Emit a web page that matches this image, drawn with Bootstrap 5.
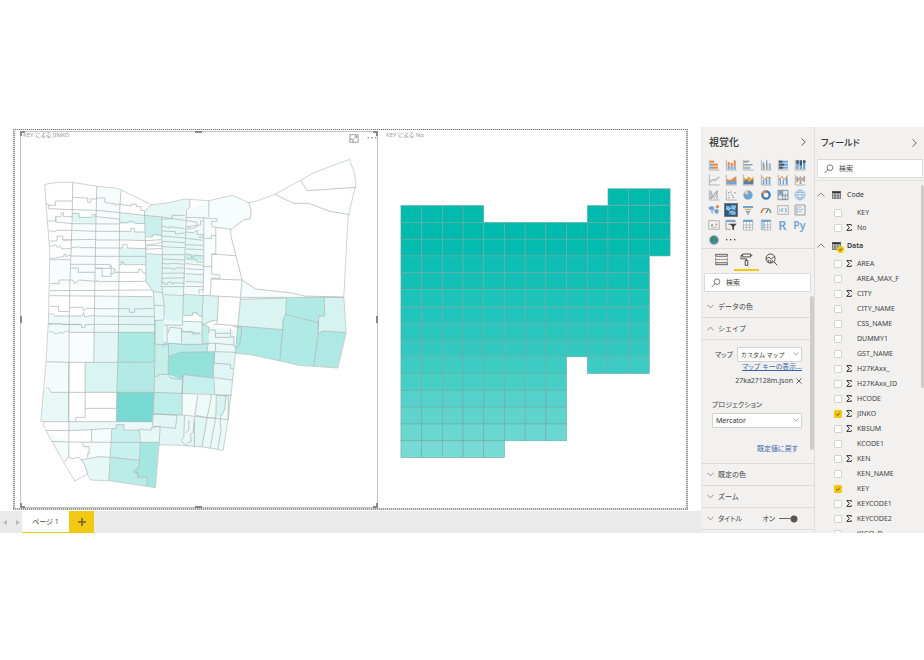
<!DOCTYPE html>
<html lang="ja">
<head>
<meta charset="utf-8">
<meta name="viewport" content="width=device-width, initial-scale=1">
<title>レポート - ページ 1</title>
<link href="https://cdn.jsdelivr.net/npm/bootstrap@5.3.0/dist/css/bootstrap.min.css" rel="stylesheet">
<style>
body{height:100vh;padding:127px 0;background:#fff;color:#444;font:7px/10px "Noto Sans","Noto Sans CJK JP",sans-serif;font-feature-settings:"palt";overflow:hidden}
svg{display:block}
.report{margin:2px 13px 1px;padding:2px;background:repeating-linear-gradient(90deg,#777 0 1px,#ddd 1px 2px) top/100% 1px no-repeat,repeating-linear-gradient(90deg,#999 0 1px,#ddd 1px 2px) bottom/100% 2px no-repeat,repeating-linear-gradient(#999 0 1px,#ddd 1px 2px) left/2px 100% no-repeat,repeating-linear-gradient(#999 0 1px,#ddd 1px 2px) right/2px 100% no-repeat}
.visual-a{flex:357;margin-left:5px;border:1px solid #c4c4c4}
.visual-b{flex:309}
.visual-title{font-size:6px;line-height:6px;color:#999;padding:0 0 0 2px;height:16px}
.visual-b .visual-title{padding:1px 0 0 8px}
.plot{width:100%;min-height:0;flex:1 1 0}
.icon-btn{border:0;background:none;padding:0;color:#777;line-height:0}
.handle{position:absolute;border:0 solid #888}
.h-tl{top:-1px;left:-1px;width:5px;height:5px;border-width:2px 0 0 2px}
.h-tr{top:-1px;right:-1px;width:5px;height:5px;border-width:2px 2px 0 0}
.h-bl{bottom:-1px;left:-1px;width:5px;height:5px;border-width:0 0 2px 2px}
.h-br{bottom:-1px;right:-1px;width:5px;height:5px;border-width:0 2px 2px 0}
.h-t,.h-b{left:50%;width:7px;margin-left:-4px;border-top-width:2px}
.h-t{top:-1px}.h-b{bottom:-1px}
.h-l,.h-r{top:50%;height:7px;margin-top:-4px;border-left-width:2px}
.h-l{left:-1px}.h-r{right:-1px}
.tabs-bar{height:22px;background:#eaeaea}
.page-arrow{width:13px;border:0;background:none;padding:0 0 0 7px;color:#aaa}
.page-arrow:first-child{width:9px;padding:0 0 0 3px}
.page-tab{width:47px;background:#fff;border:0;border-bottom:1px solid #f2c811;font-size:7px;padding:0;color:#444}
.page-add{width:25px;background:#f2c811;border:0;padding:0;color:#666}
.pane{background:#f2f1f0}
.pane-viz{width:113px;border-left:1px solid #eceae8}
.pane-fields{width:110px;border-left:1px solid #e1dfdd}
.pane-head{height:30px;padding:0 8px 0 7px}
.pane-title{font-size:10px;line-height:14px;font-weight:500;margin:0;color:#333}
.pane-fields .pane-title{font-size:9px}
.pane-fields .pane-head{padding:0 7px 0 6px;height:32px}
.gallery{display:grid;grid-template-columns:repeat(6,1fr);grid-auto-rows:15px;padding:0 5px 1px 3px;justify-items:center;align-items:center}
.gallery button{border:0;background:none;padding:0;line-height:0}
.gallery button.on{outline:1px solid #777}
.fmt-tabs{height:23px;border-top:1px solid #dddbd9;padding-left:7px}
.fmt-tabs button{width:25px;border:0;border-bottom:2px solid transparent;background:none;padding:0 6px;line-height:0}
.fmt-tabs button.on{border-bottom-color:#f2c811}
.find{background:#fff;border:1px solid #dcdad8;border-radius:1px;height:19px;padding-left:6px;gap:5px}
.find input{border:0;outline:0;background:none;font-size:7px;line-height:10px;padding:0;min-width:0;flex:1;color:#333}
.find input::placeholder{color:#444;opacity:1}
.find-viz{margin:2px 3px 4px 2px}
.find-fields{margin:0 1px 2px 2px}
.sect{height:22px;border:0;border-bottom:1px solid #dddbd9;background:none;padding:0 0 0 5px;gap:4px;width:100%;color:#444;text-align:left}
.settings{position:relative}
.thumb{position:absolute;right:0;width:3px;background:#cfcdcb;border-radius:2px}
.thumb-viz{top:0;height:154px;width:4px}
.thumb-fields{top:4px;height:203px}
.shape-body{height:124px;border-bottom:1px solid #dddbd9;padding:7px 12px 0 10px}
.pick{position:relative}
.pick select{appearance:none;border:1px solid #d4d2d0;border-radius:1px;background:#fff;height:15px;width:100%;padding:0 8px 0 3px;font-size:7px;line-height:10px;color:#333}
.pick svg{position:absolute;right:3px;top:5px;pointer-events:none}
.pick-map{width:65px}
.pick-map select{font-size:6px}
.lnk{color:#3a67a8}
.file-row{height:14px;gap:3px}
.proj-row{padding-top:15px}
.toggle{appearance:none;margin:0;width:19px;height:8px;background:linear-gradient(#666,#666) left center/14px 1px no-repeat,radial-gradient(circle at 15px 4px,#555 3px,transparent 4px)}
.tree{position:relative;border-top:1px solid #e3e1df;padding-top:3px;min-height:0}
.tree-head{height:21px;padding:0 0 0 2px;border:0;background:none;color:#333;gap:3px;width:100%;text-align:left}
.tree-head .tname{padding-left:3px}
.field{height:15px;padding-left:19px}
.field .sig{width:15px;padding-left:4px;line-height:10px}
.field .form-check-input{width:8px;height:8px;margin:0;border:1px solid #d6d4d2;border-radius:1px;background-color:#fff;flex:none}
.field .form-check-input:checked{background-color:#f2c811;border-color:#f2c811;background-image:url("data:image/svg+xml,%3Csvg xmlns='http://www.w3.org/2000/svg' viewBox='0 0 8 8'%3E%3Cpath d='M1.5 4l2 2 3-4' fill='none' stroke='%23443'/%3E%3C/svg%3E")}
</style>
<script src="https://cdn.jsdelivr.net/npm/bootstrap@5.3.0/dist/js/bootstrap.bundle.min.js"></script>
</head>
<body>
<svg width="0" height="0" class="position-absolute" aria-hidden="true">
<symbol id="down" viewBox="0 0 8 5"><path d="M.5.5 4 4 7.500.5" fill="none" stroke="#666" stroke-width=".8"/></symbol>
<symbol id="up" viewBox="0 0 8 5"><path d="M.5 4.500 4 1l3.500 3.500" fill="none" stroke="#666" stroke-width=".8"/></symbol>
<symbol id="next" viewBox="0 0 5 8"><path d="M.5.5 4.300 4 .5 7.500" fill="none" stroke="#555" stroke-width=".9"/></symbol>
<symbol id="lens" viewBox="0 0 30 30"><circle cx="18" cy="11" r="8.500" fill="none" stroke="#444" stroke-width="2.200"/><path d="M12 17 2 27" stroke="#444" stroke-width="2.400"/></symbol>
<symbol id="table" viewBox="0 0 27 24"><path d="M1 1h25v22H1z" fill="#eee" stroke="#444" stroke-width="2"/><path d="M1 1h25v6H1z" fill="#333"/><path d="M1 12.500h25M1 18h25M9 5v18M18 5v18" stroke="#444" stroke-width="2"/></symbol>
</svg>
<main class="d-flex h-100 overflow-hidden">
<section class="d-flex flex-column flex-fill" style="min-width:0">
  <div class="report d-flex flex-fill" style="min-height:0">
    <article class="visual-a position-relative d-flex flex-column">
      <header class="visual-title d-flex justify-content-between"><span>KEY による JINKO</span>
        <span class="d-flex align-items-center gap-2 pb-1">
          <button class="icon-btn" aria-label="フォーカス モード"><svg width="10" height="9" viewBox="0 0 28 26"><path d="M2 2h24v22H2zM2 15h9v9M13 14l9-8m-6 0h6v6" fill="none" stroke="currentColor" stroke-width="2"/></svg></button>
          <button class="icon-btn" aria-label="その他のオプション"><svg width="10" height="9" viewBox="0 0 28 26" fill="#666"><circle cx="3" cy="11" r="2"/><circle cx="14" cy="11" r="2"/><circle cx="25" cy="11" r="2"/></svg></button>
        </span></header>
      <svg class="plot" viewBox="63 84 1065 1077" role="img" aria-label="KEY による JINKO">
        <g id="areas"></g>
        <g fill="none" stroke="#adb5b5" stroke-width="2.200" stroke-linejoin="round">
          <path stroke="#bcc3c3" d="M133 193 170 187H217L289 199 352 205 453 254 500 249 552 237 625 242 697 226 745 248 770 243 823 223 900 181 940 158 1047 118 1062 160 1067 190 1043 290 1030 530 1037 630V638L1012 744 940 739 895 736 840 723 750 704 705 700 683 898 668 991 602 980 540 976 476 974 465 1103 325 1082 270 1080 260 1063 223 1083 190 1028 137 933 130 920V905H121L130 803 137 725 144 600 148 400 146 370 137 253Z"/>
          <!-- west blocks, streets running north to south -->
          <path d="M217 187 215 300 208 500 206 630 205 1010M289 199 286 330 283 500 280 727M362 210 358 260 356 430 354 630 352 727 349 817 348 905M453 254 432 275 436 400V485L459 515 463 600V727L461 817 457 907M484 291V348L486 420 484 500 491 555V600M569 239 568 262 558 272 555 350 552 450 549 520 546 615M457 515 488 518"/>
          <!-- west blocks, lots -->
          <path d="M137 253H145V256H165V243H216M217 232 262 234V247H271V236L289 238M289 234H313V247L344 252V256L350 252 392 258V253H408V260H422V271H433M145 256V266L216 269 286 271 358 278 433 286 484 291M141 303H166V290H182V279H189V290H216M216 280H236V292H275V283H284V292M286 290 357 297M166 290V306L216 311 357 312M357 308H380L386 304H398L405 310 433 311M145 332H149L153 337 158 331 163 337 168 331H214L286 334H391V325H402V336H434"/>
          <path d="M148 363H170V348H187V360H214M187 360 286 358M286 360H372L435 362M146 378H160L165 374 172 383 178 377 184 386H214M214 382H228L232 379 237 383H285M285 384H367V373H380V384L436 386M150 415 170 413 190 409V404H197V411L208 405V408L286 409H436M148 419H208M211 433H284L329 434V445H284M284 445H305V469H332V434M332 445H341L345 450H341V459L332 462M341 457H415V448H423L428 459H436M357 434H363V424L370 427V434H435M211 444H234V457H284M211 480H216L222 491 230 485 236 480 283 484H290V481L296 485 436 484M150 491H176V480H208M148 512 456 510M148 527 456 530"/>
          <path d="M148 559H174V574L206 575M208 562H247L250 573 257 565H283M283 566H387V577H402V567L460 565M146 582H160L164 589 172 588H207M207 588H246L249 577 252 590 283 586M283 588 461 590M144 610 207 614H243V622H254V614L283 613 463 614M146 636H156L167 642 176 637 186 640 195 634H204M144 613H152L160 610 167 614 175 609 183 613H240M205 637H463M137 725 205 727H453L458 722H463M137 803 144 804 152 817H461M254 727V892M254 865H348M205 727 204 905M226 904V892H254M130 905H457M137 931 203 932 273 929 330 925M154 964 203 966 335 967H475M273 929V966M334 925 325 1082M205 1010 190 1028M205 1010 214 1016 235 1012 242 1020 295 1010 334 1012 416 1021M242 1020 253 1035 262 1063M246 967 249 980H266V1000H262V1013"/>
          <path d="M334 926H347V914H370V930H417L419 966 416 1042H410V1050H403V1057H412V1072H440V1097M417 927 452 931V923H464V919L479 921 476 975M457 907 455 918 465 919M457 882 530 886 525 925 465 919"/>
          <!-- central strip -->
          <path d="M436 348 445 352 457 350V344H470L484 348M436 362 484 359M436 374 484 378M436 388 484 385M436 401 484 404M436 388 442 377 484 367M484 291 553 301M484 298 515 296V286H553M484 318 508 324V320L553 326M484 333 525 335V342L553 339M484 348 553 354M484 364 553 368M484 380 553 383M484 404 553 404M484 417 553 420M484 430 500 432 520 430 553 433M484 444H508L518 448 530 443 553 445M484 460 553 459M484 475 553 473M484 487H492V493H502V486H513V492H520V488L553 490M484 500 553 500M490 524 549 526M460 556 489 557M463 602 490 600M490 615 546 616M500 615V666M463 672 488 674V683M489 668 555 674 625 672M463 602V672"/>
          <path d="M502 640 508 622 543 625V667M543 625 548 635 575 635V642H590L600 636M488 674H504V700L503 760M504 710 540 697 642 695 638 774M503 760 510 774 540 779 550 764 638 774M463 769 475 768V763H508M546 767 545 883M549 764 544 820M461 817 695 826M457 882 545 885H545L684 899M552 888 550 950 543 962 548 970 565 977M582 890 578 936 570 942 572 965 560 968"/>
          <!-- small lots east of the main avenue -->
          <path d="M625 242V292M556 293 576 292 605 294 610 292V440L608 520M556 301 590 307V320L575 326 563 322V329H556M556 320 600 315V303H610M556 336 580 338 590 330V344H607V352H594M556 355 608 361M556 374 608 376M556 387 608 389M556 402 572 404V412H580V405L608 408M556 416 590 420V426H608M556 431 608 436M556 446 608 449M556 461 608 464M556 485 608 487M556 499 608 500M608 509H596V522M610 294 635 296H650V304H634V320L693 328M646 322V402M633 346V355H610M633 346H646M646 402H634V462L658 465V475H630M634 402 706 407M608 440H634M632 477 630 526M632 477 725 480M548 523 720 532M654 529 650 612 640 614M608 525 605 590M550 587H576V578H590L594 587 605 590V616L632 602 650 600M547 604 605 606"/>
          <path d="M745 248 751 268V296L730 300 690 329M690 329 692 350 725 480 765 507 875 519 912 528 1030 531M725 480 720 530M720 538 858 534 855 583 848 600 847 630M720 532 718 560 712 618 847 629M855 583 953 608M971 532 973 588H955L953 630M901 181 920 212 1067 202M823 223 880 250H925L988 274 1048 284M720 532 1030 532M953 600V640L940 739M953 640 970 633 1037 638M847 629 838 723M712 618 705 700M650 612 712 618"/>
          <path d="M605 616V667M605 610 625 620V640M546 636H575L600 642M605 670H645L700 675M620 680V695M645 670V695L705 697M628 630H645V640H690M645 640V652H690M690 628V650H700V675L705 685 718 675 720 648 724 645M700 620 722 622 723 645M643 696 640 730 690 733V745L700 747M640 772 698 781M640 774 643 822M592 825 583 885 619 893M632 825V835L620 892 605 980M648 825 646 892 629 984M677 825 672 870 660 888 659 908 662 930 652 988M619 893 646 894M645 825 684 828 683 898M582 905V980M565 900V930L555 940"/>
        </g>
      </svg>
      <i class="handle h-tl"></i><i class="handle h-t"></i><i class="handle h-tr"></i><i class="handle h-l"></i><i class="handle h-r"></i><i class="handle h-bl"></i><i class="handle h-b"></i><i class="handle h-br"></i>
    </article>
    <article class="visual-b d-flex flex-column">
      <header class="visual-title">KEY による No</header>
      <svg class="plot" viewBox="-9 81 927 1083" role="img" aria-label="KEY による No"><g id="tiles" stroke="#72aaa4" stroke-width="1.800"></g></svg>
    </article>
  </div>
  <nav class="tabs-bar d-flex flex-shrink-0" aria-label="ページ">
    <button class="page-arrow" aria-label="前へ"><svg width="4" height="5" viewBox="0 0 4 5"><path d="M4 0v5L0 2.500z" fill="#bbb"/></svg></button>
    <button class="page-arrow" aria-label="次へ"><svg width="4" height="5" viewBox="0 0 4 5"><path d="M0 0v5l4-2.500z" fill="#bbb"/></svg></button>
    <button class="page-tab">ページ 1</button>
    <button class="page-add d-flex align-items-center justify-content-center" aria-label="新しいページ"><svg width="8" height="8" viewBox="0 0 8 8"><path d="M4 0v8M0 4h8" stroke="#6b6335" stroke-width="1.600"/></svg></button>
  </nav>
</section>

<aside class="pane pane-viz d-flex flex-column flex-shrink-0 overflow-hidden">
  <header class="pane-head flex-shrink-0 d-flex align-items-center justify-content-between"><h2 class="pane-title">視覚化</h2><button class="icon-btn" aria-label="折りたたむ"><svg width="5" height="8"><use href="#next"/></svg></button></header>
  <div class="gallery flex-shrink-0" id="gallery"></div>
  <div class="fmt-tabs d-flex flex-shrink-0">
    <button aria-label="フィールド"><svg width="13" height="13" viewBox="0 0 40 40" fill="none" stroke="#444" stroke-width="2.500"><path d="M2 4h36v6H2zM2 30h36v6H2z"/><path d="M2 14v13M38 14v13M2 20h36" stroke-dasharray="3 2"/></svg></button>
    <button class="on" aria-label="書式"><svg width="13" height="13" viewBox="0 0 40 40" fill="none" stroke="#333" stroke-width="2.600"><path d="M8 3h25v9H8zM8 7H3v11h17v5M33 7h5M16 23h8v15h-8z"/></svg></button>
    <button aria-label="分析"><svg width="13" height="13" viewBox="0 0 40 40" fill="none" stroke="#333" stroke-width="2.600"><circle cx="17" cy="17" r="14"/><path d="M27 27 38 38M4 18l8-5 7 6 11-9M10 29v-8M16 31v-9M22 29v-7"/></svg></button>
  </div>
  <label class="find find-viz d-flex align-items-center flex-shrink-0"><svg width="10" height="10"><use href="#lens"/></svg><input type="search" placeholder="検索" aria-label="書式の検索"></label>
  <div class="settings flex-shrink-0">
    <button class="sect d-flex align-items-center"><svg width="7" height="5"><use href="#down"/></svg>データの色</button>
    <button class="sect d-flex align-items-center"><svg width="7" height="5"><use href="#up"/></svg>シェイプ</button>
    <div class="shape-body">
      <div class="d-flex align-items-center justify-content-end gap-1"><label for="map">マップ</label><span class="pick pick-map"><select id="map"><option>カスタム マップ</option></select><svg width="6" height="4"><use href="#down"/></svg></span></div>
      <div class="text-end"><a class="lnk" href="#">マップ キーの表示...</a></div>
      <div class="file-row d-flex align-items-center justify-content-end pt-1"><span>27ka27128m.json</span><button class="icon-btn" aria-label="削除"><svg width="6" height="6" viewBox="0 0 6 6"><path d="M.5.5l5 5m0-5-5 5" stroke="#444" stroke-width=".8"/></svg></button></div>
      <div class="proj-row d-flex flex-column"><label for="proj" class="pb-1" style="line-height:8px">プロジェクション</label><span class="pick"><select id="proj"><option>Mercator</option></select><svg width="6" height="4"><use href="#down"/></svg></span></div>
      <div class="text-end pt-3 pe-1"><a class="lnk text-decoration-none" href="#">既定値に戻す</a></div>
    </div>
    <button class="sect d-flex align-items-center"><svg width="7" height="5"><use href="#down"/></svg>既定の色</button>
    <button class="sect d-flex align-items-center"><svg width="7" height="5"><use href="#down"/></svg>ズーム</button>
    <div class="sect d-flex align-items-center"><svg width="7" height="5"><use href="#down"/></svg>タイトル<label class="ms-auto d-flex align-items-center gap-1 pe-3">オン<input class="toggle" type="checkbox" role="switch" checked></label></div>
    <i class="thumb thumb-viz"></i>
  </div>
</aside>

<aside class="pane pane-fields d-flex flex-column flex-shrink-0 overflow-hidden">
  <header class="pane-head flex-shrink-0 d-flex align-items-center justify-content-between"><h2 class="pane-title">フィールド</h2><button class="icon-btn" aria-label="折りたたむ"><svg width="5" height="8"><use href="#next"/></svg></button></header>
  <label class="find find-fields d-flex align-items-center flex-shrink-0"><svg width="10" height="10"><use href="#lens"/></svg><input type="search" placeholder="検索" aria-label="フィールドの検索"></label>
  <div class="tree flex-fill overflow-hidden"><div id="tree"></div><i class="thumb thumb-fields"></i></div>
</aside>
</main>
<script>
// Shaded blocks: fill colour followed by outline points.
const areas = [
 ['#f7fdfc','289 199 352 205 362 210 358 278 286 271'],['#f7fdfc','215 300 286 300 283 500 209 500'],['#f6fdfc','283 271 358 278 355 500 283 500'],
 ['#f7fdfc','148 419 208 419 208 500 146 500'],['#f3fcfb','283 530 355 530 354 637 281 637'],
 ['#e6f8f6','453 254 500 249 552 237 569 239 568 262 553 275 553 301 484 291 432 285 432 275'],
 ['#def6f4','358 278 433 286 433 311 357 311'],['#def6f4','216 280 236 280 236 292 275 292 286 283 286 309 216 306'],
 ['#eaf9f8','357 334 434 336 435 362 357 360'],['#def6f4','357 384 436 386 436 433 357 434'],
 ['#c9f0ed','432 286 484 291 484 348 457 344 457 350 436 348'],['#d8f4f2','436 401 484 404 484 515 459 515 436 485'],
 ['#e4f8f6','484 291 553 301 556 520 490 524 484 500'],['#f2fbfa','553 275 625 242 625 292 610 295 608 520 552 520'],
 ['#dcf5f3','490 524 549 526 546 616 500 612 491 580'],['#e6f8f6','459 515 490 518 491 600 463 602'],
 ['#d3f2f0','463 602 500 602 500 672 463 672'],['#f6fdfc','625 242 697 226 745 248 751 268 751 296 730 300 690 329 634 320 634 477 610 477 610 294 625 292'],
 ['#e4f8f6','556 336 608 340 608 430 556 430'],['#c6f0ec','556 402 608 408 608 420 556 416'],['#e5f8f7','556 461 608 464 608 487 556 485'],
 ['#d0f2ef','549 524 608 525 605 590 576 578 576 587 546 587'],['#dcf5f3','608 525 654 529 650 600 605 616'],
 ['#e2f7f5','354 530 460 530 463 637 354 637'],['#eefaf9','144 588 354 590 354 637 142 637'],['#e0f6f4','354 590 463 590 463 614 354 614'],
 ['#f7fdfc','725 480 765 507 912 528 720 532'],['#d9f4f1','720 538 858 534 847 629 712 618'],['#b0eae5','858 534 971 532 973 588 955 588 953 608 855 583'],
 ['#b0eae5','855 583 953 608 953 640 940 739 895 736 838 723 847 600'],['#d5f3f1','971 532 1030 531 1037 638 970 633 953 640 955 588 973 588'],
 ['#aee9e4','953 640 970 633 1037 638 1012 744 940 739'],['#aeeae5','712 618 847 629 838 723 750 704 705 700 705 685'],
 ['#f4fcfb','144 637 205 637 205 727 137 725'],['#f8fdfd','205 637 280 637 280 727 205 727'],['#e2f7f5','280 637 353 637 352 727 280 727'],
 ['#aae8e2','353 637 463 637 463 722 453 727 352 727'],['#f4fcfb','137 725 205 727 205 817 152 817 137 803'],['#daf4f2','254 727 352 727 349 817 254 817'],
 ['#b3eae5','352 727 463 722 461 817 349 817'],['#e8f8f7','130 803 152 817 205 817 204 905 121 905'],['#78d9d2','349 817 461 817 457 907 348 905'],
 ['#eaf9f8','204 905 457 907 465 919 452 931 334 925 205 932'],['#f5fcfc','137 933 205 966 205 1010 190 1028'],['#f5fcfc','273 929 334 925 334 1012 262 1013 246 967 273 966'],
 ['#c8f0ec','334 926 347 926 347 914 370 914 370 930 417 930 416 1021 331 1012'],['#e4f8f6','417 927 479 921 475 967 419 967'],
 ['#e6f8f6','242 1020 295 1010 331 1012 325 1082 270 1080 262 1063'],['#baece7','331 1012 416 1021 416 1042 403 1057 412 1072 440 1072 440 1099 325 1082'],
 ['#a5e6e1','419 967 475 967 465 1103 440 1099 440 1072 412 1072 403 1057 416 1042'],
 ['#e8f9f7','491 600 605 606 625 620 705 630 705 700 643 695 488 672'],['#d9f5f2','546 640 575 635 605 642 605 670 543 668'],['#c2eeea','605 610 625 620 625 670 605 670'],
 ['#bbece8','488 668 625 672 620 695 540 697 504 710 488 700'],['#c5efeb','463 672 504 674 503 763 463 769'],['#92e2da','504 710 540 697 642 695 638 774 550 764 540 779 510 774 503 760'],
 ['#d4f3f0','463 769 503 763 546 779 545 820 461 817'],['#bcede8','461 817 545 820 545 885 457 882'],['#c6f0ec','549 764 638 774 643 822 545 820'],
 ['#e0f6f4','643 696 705 700 698 781 640 772'],['#e6f8f6','640 772 698 781 695 826 643 822'],['#e2f7f5','457 882 545 885 552 888 550 976 476 975 479 921 455 918'],
 ['#f4fcfb','545 820 592 825 583 885 545 885'],['#ecfaf8','592 825 695 826 684 899 583 885'],['#d5f3f1','652 825 677 825 669 888 645 888'],
 ['#eaf9f8','552 888 684 899 668 991 540 976'],['#e0f6f4','582 890 619 893 605 980 566 977']
];
document.getElementById('areas').innerHTML = areas.map(([c,p]) => `<polygon fill="${c}" points="${p}"/>`).join('');

// Tile map: [first column, last column] spans and colour for each row.
const rows = [['#00baae',10,12],['#00baae',0,3,9,12],['#00baae',0,12],['#04bbb0',0,12],['#0cbeb3',0,11],['#14c0b6',0,11],['#1cc3b9',0,11],['#22c5bb',0,11],
 ['#29c6bd',0,11],['#33c9c0',0,11],['#3dccc3',0,7,9,11],['#47cfc6',0,7],['#53d1ca',0,7],['#5ed4cd',0,7],['#6ad7d1',0,7],['#78dad5',0,4]];
const W = 62.3, H = 50.56;
let t = '';
rows.forEach(([c,...s], r) => { for (let k = 0; k < s.length; k += 2) for (let i = s[k]; i <= s[k+1]; i++)
  t += `<rect x="${60+i*W}" y="${205+r*H}" width="${W}" height="${H}" fill="${c}"/>`; });
document.getElementById('tiles').innerHTML = t;

// Visual gallery, 36-unit icons.
const B = '#6fa5d6', O = '#e58a4a', G = '#999', D = '#444';
const ax = `<path d="M4 2v31h31" fill="none" stroke="${G}" stroke-width="2"/>`;
const r = (c,...q) => q.map(([x,y,w,h]) => `<rect x="${x}" y="${y}" width="${w}" height="${h}" fill="${c}"/>`).join('');
const l = (c,d,w=2) => `<path d="${d}" fill="none" stroke="${c}" stroke-width="${w}"/>`;
const frame = l('#999','M2 5h32v26H2z');
const tbl = r('#fff',[4,3,28,30]) + l('#888','M4 3h28v30H4zM4 18h28M4 25h28M13 9v24M23 9v24',1.6) + r(B,[4,3,28,6]);
const icons = [
 ['積み上げ横棒グラフ', ax+r(O,[6,5,13,6],[10,14,20,6],[12,23,18,6])+r(B,[6,14,6,6],[6,23,8,6])],
 ['積み上げ縦棒グラフ', ax+r(O,[8,9,6,14],[17,12,6,10],[26,4,6,18])+r(B,[8,23,6,8],[17,22,6,9],[26,22,6,9])],
 ['集合横棒グラフ', ax+r(B,[6,5,16,4],[6,15,26,4],[6,25,18,4])+r('#edb66c',[6,9,11,3],[6,19,20,3])],
 ['集合縦棒グラフ', ax+r(B,[8,10,4,21],[18,4,4,27],[28,13,4,18])+r('#e6b877',[12,16,3,15],[22,12,3,19])],
 ['100% 積み上げ横棒', ax+r(B,[6,5,27,6],[6,14,27,6],[6,23,27,6])+r('#456',[6,5,10,6],[6,14,16,6],[6,23,12,6])],
 ['100% 積み上げ縦棒', ax+r(B,[7,4,7,27],[17,4,7,27],[27,4,7,27])+r('#456',[7,4,7,10],[17,4,7,15],[27,4,7,8])],
 ['折れ線', ax+l(B,'M5 27 14 17l7 5L34 10')+l(G,'M5 22l9-5 8-1 12-8')],
 ['面', ax+`<path d="M5 14l10 5L34 6v25H5z" fill="${O}"/><path d="M5 22l12 1 17-6v14H5z" fill="${B}"/>`],
 ['積み上げ面', ax+`<path d="M5 9l8 7 7-9 7 8 7-8v24H5z" fill="#e5a13f"/><path d="M5 23l8-7 9 8 12-9v16H5z" fill="#577fa5"/>`],
 ['折れ線と積み上げ縦棒', ax+r(B,[8,17,5,14],[17,13,5,18],[26,9,5,22])+l(O,'M5 8l9 8 8-7 11 3',3)],
 ['折れ線と集合縦棒', ax+r(B,[8,14,4,17],[17,17,4,14],[26,10,6,21])+l(O,'M5 20 14 7l8 10L33 4',3)],
 ['リボン', ax+r(B,[7,8,5,12],[17,16,5,14],[28,7,5,12])+l(O,'M7 25l12-15 13 13',4)],
 ['ウォーターフォール', ax+l(B,'M9 6v24l18-25v25',3)+l(O,'M9 7l9 21 9-18')],
 ['散布図', ax+r(B,[9,9,4,4],[19,16,4,4],[28,9,4,4],[10,24,4,4])+r(O,[16,7,4,4],[23,23,4,4],[10,17,3,3])],
 ['円', `<circle cx="18" cy="18" r="14" fill="${B}"/><path d="M18 18V3a15 15 0 0 0-13 8z" fill="#f2cda9"/>`],
 ['ドーナツ', `<circle cx="18" cy="18" r="11" fill="none" stroke="#3f7fb5" stroke-width="7"/><path d="M18 7a11 11 0 0 0-10 7" fill="none" stroke="${O}" stroke-width="7"/>`],
 ['ツリーマップ', r('#dceaf5',[3,4,30,28])+l('#666','M3 4h30v28H3zM17 4v28M3 18h30M25 18v14')+r(B,[5,6,10,10])],
 ['マップ', l(B,'M18 3a15 15 0 1 0 .1 0zM3 18h30M6 10h24M6 26h24M18 3c-9 9-9 21 0 30M18 3c9 9 9 21 0 30')],
 ['塗り分け地図', `<path d="M2 9l11-3 7 5-5 9-7-1-6-4zM18 19l7-5 8 5-4 11-8-2z" fill="${B}"/><circle cx="28" cy="8" r="5" fill="${O}"/><path d="M8 23l6-1v8z" fill="${G}"/>`],
 ['図形マップ', r('#2d5878',[0,0,36,36])+`<path d="M3 5l11 2 4 7-7 7-8-5zM17 4h16v9l-8 4-7-5zM14 22l8-3 10 4v9H18z" fill="#79b7e5"/>`+l('#e6eef5','M3 15l10 1 7-3 13 5M15 20l-3 12',1.5)],
 ['じょうご', r(B,[3,6,30,6],[12,21,12,5],[15,28,6,4])+r('#e8b36b',[8,14,20,5])],
 ['ゲージ', l(G,'M4 27a14 14 0 0 1 28 0',4)+l(O,'M4 27a14 14 0 0 1 9-13',5)+l('#67a587','M23 14a14 14 0 0 1 9 13',4)+l(D,'M18 27l6-10',3)],
 ['カード', frame+l(B,'M8 14v9M13 14h5v4h-5v5h5M23 14h5v9h-5M24 18h4')],
 ['複数の行カード', l('#777','M3 3h30v30H3zM9 7v22')+l(B,'M13 9h9M13 16h15M13 23h10')],
 ['KPI', frame+`<path d="M8 20l4-6 4 6z" fill="#479069"/><path d="M21 14h8l-4 7z" fill="${O}"/>`+l(G,'M9 25h18')],
 ['スライサー', l('#777','M3 4h27v7M3 4v27h14M9 16h9')+r(B,[4,4,26,5])+`<path d="M14 14h21l-8 9v11l-5-3v-8z" fill="#444"/>`],
 ['テーブル', tbl],['マトリックス', tbl+r('#a9cbe8',[5,10,7,22])],
 ['R', `<text x="4" y="33" font-family="Noto Sans,sans-serif" font-size="38" font-weight="600" fill="${B}">R</text>`],
 ['Python', `<text x="-2" y="29" font-family="Noto Sans,sans-serif" font-size="31" font-weight="600" fill="${B}">Py</text>`],
 ['ArcGIS', `<circle cx="18" cy="18" r="14" fill="#4586b4" stroke="#b8c4cb" stroke-width="3"/><path d="M9 10l9-3 2 7-6 5 3 8-6-4-4-6zM23 12l7 5-5 9-4-6z" fill="#458654"/>`],
 ['その他', r(D,[3,15,4,4],[15,15,4,4],[27,15,4,4])]
];
document.getElementById('gallery').innerHTML = icons.map(([n,s]) => `<button aria-label="${n}"${n==='図形マップ'?' class="on"':''}><svg width="12" height="12" viewBox="0 0 36 36" overflow="visible">${s}</svg></button>`).join('');

// Field tree. After the bar, "s" marks a summed field and "x" a ticked one.
const groups = {Code:['KEY','No|s'],Data:['AREA|s','AREA_MAX_F','CITY|s','CITY_NAME','CSS_NAME','DUMMY1','GST_NAME','H27KAxx_|s','H27KAxx_ID|s','HCODE|s','JINKO|sx','KBSUM|s','KCODE1','KEN|s','KEN_NAME','KEY|x','KEYCODE1|s','KEYCODE2|s','KIGO_D']};
const sig = '<svg width="6" height="7" viewBox="0 0 6 7"><path d="M5.300 1.800V.6H.8L3.300 3.500.8 6.400h4.500V5.200" fill="none" stroke="#333"/></svg>';
document.getElementById('tree').innerHTML = Object.entries(groups).map(([g,f]) =>
 `<button class="tree-head d-flex align-items-center"><svg width="8" height="5"><use href="#up"/></svg><span class="position-relative ms-1"><svg width="9" height="8"><use href="#table"/></svg>${g==='Data'?'<svg class="position-absolute top-50 start-50" width="7" height="7" viewBox="0 0 7 7"><circle cx="3.500" cy="3.500" r="3.500" fill="#f2c811"/><path d="M2 3.500l1 1L5 2.500" fill="none" stroke="#333"/></svg>':''}</span><span class="tname ${g==='Data'?'fw-semibold':''}">${g}</span></button>` +
 f.map(v => { const [n,k=''] = v.split('|'); return `<label class="field d-flex align-items-center"><input class="form-check-input" type="checkbox"${k.includes('x')?' checked':''}><span class="sig">${k.includes('s')?sig:''}</span>${n}</label>`; }).join('')).join('');
</script>
</body>
</html>
